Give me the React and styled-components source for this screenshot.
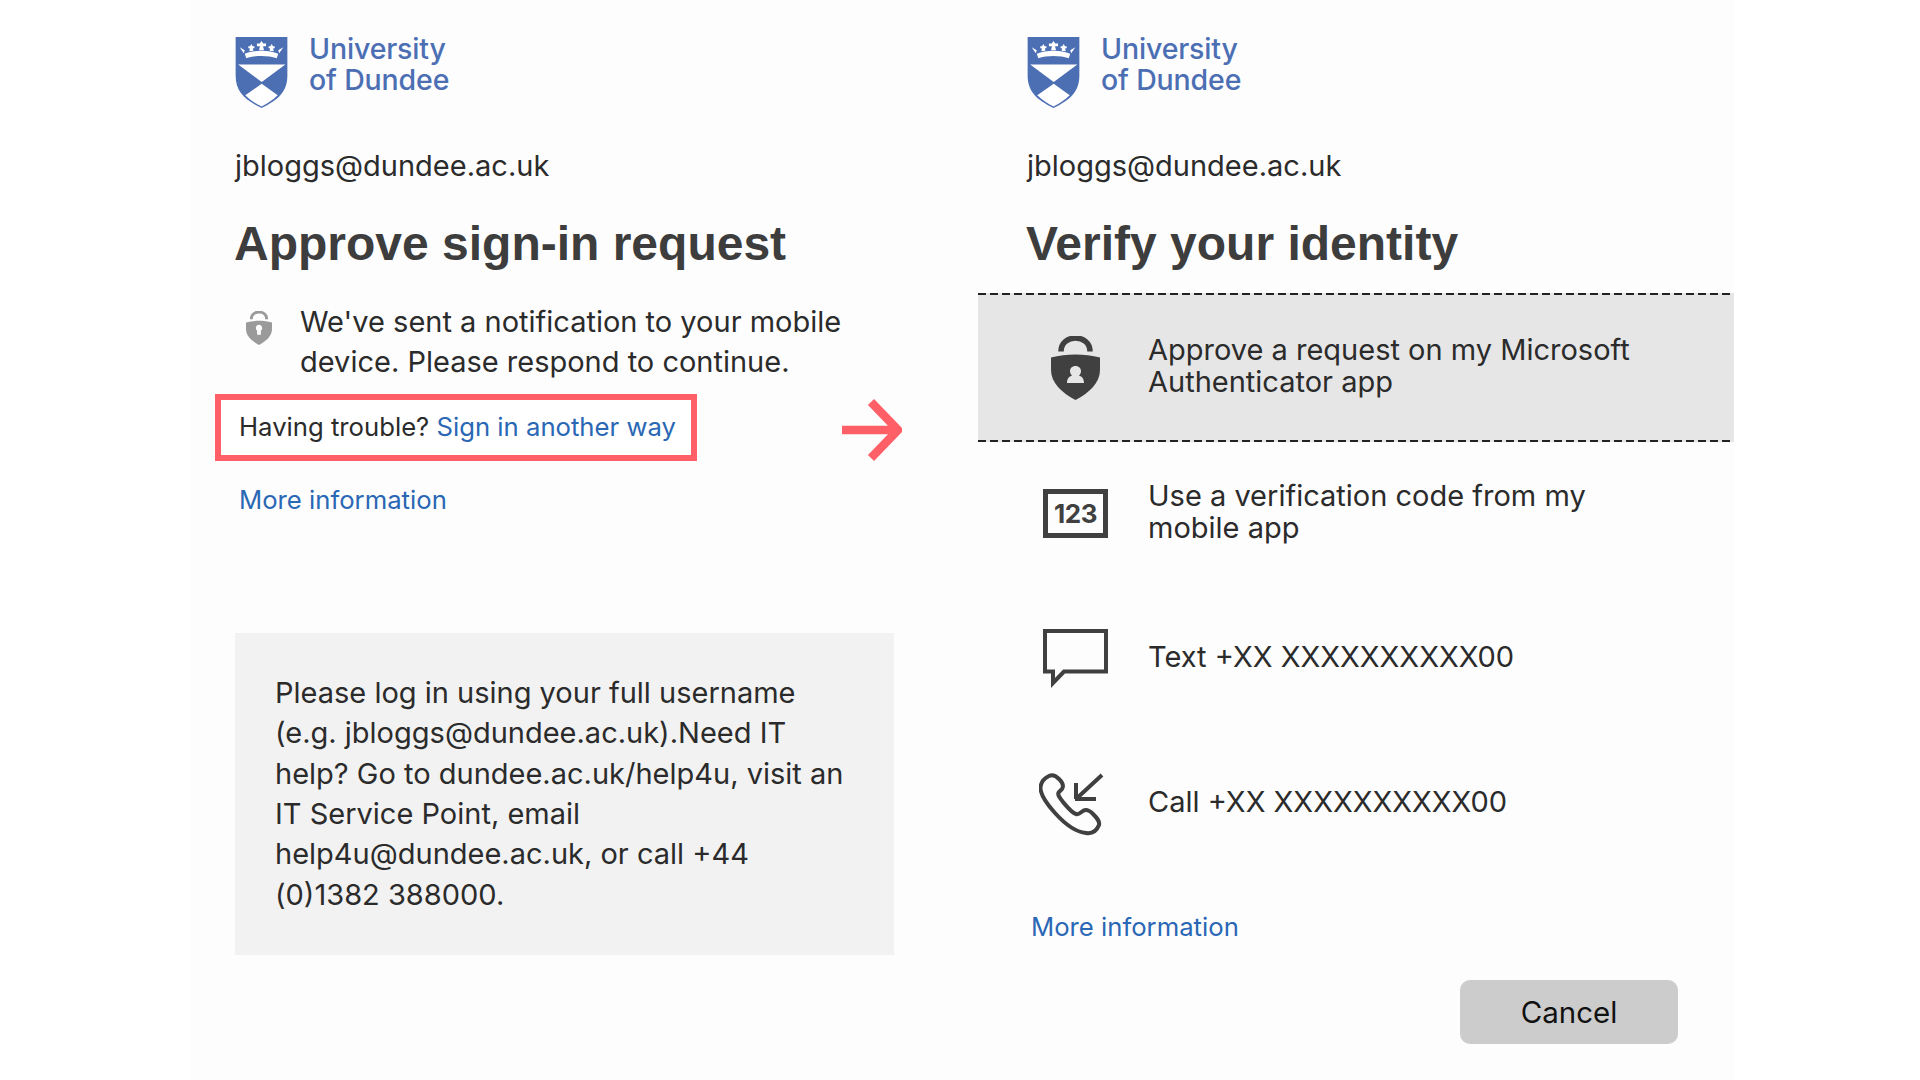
import styled, { createGlobalStyle } from "styled-components";

const GlobalStyle = createGlobalStyle`
  html, body {
    margin: 0;
    padding: 0;
    background: #ffffff;
  }
  * {
    box-sizing: border-box;
  }
`;

const Page = styled.div`
  width: 1920px;
  height: 1080px;
  overflow: hidden;
  display: flex;
  padding-left: 190px;
  font-family: Inter, "Liberation Sans", sans-serif;
  color: #2b2b2b;
`;

const Panel = styled.div`
  width: 788px;
  height: 1080px;
  padding-left: 45px;
  padding-top: 37px;
  background: #fdfdfd;
  flex: none;
`;

const RightPanel = styled.div`
  width: 756px;
  height: 1080px;
  padding-top: 37px;
  background: #fdfdfd;
  flex: none;
`;

const Brand = styled.div`
  display: flex;
  align-items: flex-start;
  gap: 21px;
  height: 71px;
`;

const BrandName = styled.div`
  margin-top: -4px;
  font-size: 28.5px;
  line-height: 31px;
  font-weight: 500;
  color: #4c6fb4;
  letter-spacing: -0.15px;
`;

const Email = styled.div`
  margin-top: 40px;
  font-size: 29px;
  line-height: 36px;
`;

const Heading = styled.h1`
  margin: 30px 0 0 -1px;
  font-family: "Liberation Sans", Arial, sans-serif;
  font-size: 48px;
  line-height: 60px;
  font-weight: 700;
  color: #3d3d3d;
`;

const Notice = styled.div`
  display: flex;
  margin-top: 28px;
  width: 659px;
`;

const NoticeIcon = styled.div`
  width: 65px;
  padding: 9px 0 0 11px;
  flex: none;
`;

const NoticeText = styled.p`
  margin: 0;
  font-size: 29px;
  line-height: 40.4px;
`;

const TroubleRow = styled.div`
  display: flex;
  align-items: center;
  margin: 11px 0 0 -20px;
`;

const TroubleBox = styled.div`
  width: 482px;
  height: 67px;
  border: 6px solid #ff6068;
  padding: 0 0 2px 18px;
  display: flex;
  align-items: center;
  background: #ffffff;
  font-size: 25.7px;
  white-space: pre;
`;

const Link = styled.a`
  color: #2a67b5;
  font-size: 25.7px;
`;

const ArrowWrap = styled.div`
  margin: 5px 0 0 145px;
  display: flex;
`;

const MoreInfo = styled.div`
  margin: ${(p) => p.$margin};
  line-height: 32px;
`;

const HelpBox = styled.div`
  width: 659px;
  height: 322px;
  margin-top: 114px;
  padding: 40px 44px 0 40px;
  background: #f2f2f2;
  font-size: 29px;
  line-height: 40.4px;
`;

const RightHead = styled.div`
  padding-left: 49px;
`;

const Methods = styled.div`
  margin-top: 19px;
  display: flex;
  flex-direction: column;
`;

const Method = styled.div`
  height: 145px;
  padding: 0 0 2px 60px;
  display: flex;
  align-items: center;
  font-size: 29px;
  line-height: 32px;
  ${(p) =>
    p.$selected &&
    `
    height: 149px;
    padding-bottom: 0;
    background-color: #e6e6e6;
    background-image:
      repeating-linear-gradient(90deg, #222222 0 8px, transparent 8px 12px),
      repeating-linear-gradient(90deg, #222222 0 8px, transparent 8px 12px);
    background-size: 100% 2px;
    background-position: top, bottom;
    background-repeat: no-repeat;
  `}
`;

const MethodLabel = styled.span`
  margin-top: -3px;
`;

const MethodIcon = styled.div`
  width: 110px;
  flex: none;
  display: flex;
  padding-left: ${(p) => p.$inset}px;
`;

const CodeBox = styled.div`
  width: 65px;
  height: 49px;
  border: 5px solid #404040;
  display: flex;
  align-items: center;
  justify-content: center;
  font-size: 26px;
  font-weight: 700;
  letter-spacing: -0.5px;
  color: #404040;
`;

const Footer = styled.div`
  display: flex;
  justify-content: flex-end;
  padding-right: 56px;
  margin-top: 34px;
`;

const CancelButton = styled.button`
  width: 218px;
  height: 64px;
  border: 0;
  border-radius: 10px;
  background: #cccccc;
  font-family: inherit;
  font-size: 29.500px;
  color: #111111;
`;

function ShieldLogo() {
  return (
    <svg width="53" height="71" viewBox="0 0 51 70">
      <path d="M0 0H51V38C51 54 42 62 25.500 70C9 62 0 54 0 38Z" fill="#4c6fb4" />
      <path d="M2.500 27H49L25.700 44.300Z" fill="#fff" />
      <path d="M25.700 46L41.500 57.500C37 62 31 66 25.500 68.500C20 66 14 62 9.500 57.500Z" fill="#fff" />
      <path d="M9 16.500C18 12.500 33 12.500 42 16.500L40.500 21C32 18 19 18 10.500 21Z" fill="#fff" />
      <path d="M25.500 4L27.200 6.500H30V9H27L28 13H23L24 9H21V6.500H23.800Z" fill="#fff" />
      <path d="M15.500 7L16.800 9H18.500V11H17L17.500 13.500L13.500 14L14 11H12.500V9H14.200Z" fill="#fff" />
      <path d="M35.500 7L36.800 9H38.500V11H37L37.500 14L33.500 13.500L34 11H32.500V9H34.200Z" fill="#fff" />
      <path d="M4 10L9 13L8 16Z" fill="#fff" />
      <path d="M47 10L42 13L43 16Z" fill="#fff" />
    </svg>
  );
}

function AuthLock({ size, color, person }) {
  return (
    <svg width={size} height={(size * 64) / 49} viewBox="0 0 49 64">
      <path d="M10 15.500C10 -2.500 39 -2.500 39 15.500" fill="none" stroke={color} strokeWidth="5.500" />
      <path
        d="M0 21.500C8 19.500 16 18.500 24.500 18.500C33 18.500 41 19.500 49 21.500V34C49 47 38 57 24.500 64C11 57 0 47 0 34Z"
        fill={color}
      />
      {person ? (
        <path
          d="M24.500 30C28 30 30 32.500 30 35C30 37 29 38.500 28 39.500C30 40.500 33 41.500 33 47H16C16 41.500 19 40.500 21 39.500C20 38.500 19 37 19 35C19 32.500 21 30 24.500 30Z"
          fill="#e6e6e6"
        />
      ) : (
        <path
          d="M24.500 26C28 26 30.500 29 30.500 32C30.500 34 29.500 36 28 37V45H21V37C19.500 36 18.500 34 18.500 32C18.500 29 21 26 24.500 26Z"
          fill="#fdfdfd"
        />
      )}
    </svg>
  );
}

function ArrowMark() {
  return (
    <svg width="60" height="62" viewBox="0 0 60 62">
      <path
        d="M0 31H55M29 3L56 31L29 59"
        fill="none"
        stroke="#ff6068"
        strokeWidth="8.500"
      />
    </svg>
  );
}

function ChatIcon() {
  return (
    <svg width="65" height="59" viewBox="0 0 65 59">
      <path
        d="M2 2H63V42.500H21L10 54V42.500H2Z"
        fill="none"
        stroke="#404040"
        strokeWidth="4"
      />
    </svg>
  );
}

function PhoneIcon() {
  return (
    <svg width="65" height="64" viewBox="0 0 65 64">
      <path
        d="M10 4C14 2 17 4 20 7C24 11 25 14 23 17L20 20C18 22 20 25 24 30C29 36 33 41 37 42C40 43 42 40 44 39C47 37 50 38 54 42C58 46 61 49 60 53C58 58 54 62 47 61C36 60 25 51 16 41C7 31 1 22 1.500 15C2 10 6 6 10 4Z"
        fill="none"
        stroke="#404040"
        strokeWidth="4"
        strokeLinejoin="round"
      />
      <path d="M37 25V9M36 25H57M37 25L63 1" fill="none" stroke="#404040" strokeWidth="4" transform="translate(0 2)" />
    </svg>
  );
}

function Logo() {
  return (
    <Brand>
      <ShieldLogo />
      <BrandName>
        University
        <br />
        of Dundee
      </BrandName>
    </Brand>
  );
}

export default function App() {
  return (
    <Page>
      <GlobalStyle />
      <Panel>
        <Logo />
        <Email>jbloggs@dundee.ac.uk</Email>
        <Heading>Approve sign-in request</Heading>
        <Notice>
          <NoticeIcon>
            <AuthLock size={26} color="#9a9a9a" />
          </NoticeIcon>
          <NoticeText>
            We've sent a notification to your mobile device. Please respond to
            continue.
          </NoticeText>
        </Notice>
        <TroubleRow>
          <TroubleBox>
            Having trouble? <Link>Sign in another way</Link>
          </TroubleBox>
          <ArrowWrap>
            <ArrowMark />
          </ArrowWrap>
        </TroubleRow>
        <MoreInfo $margin="23px 0 0 4px">
          <Link>More information</Link>
        </MoreInfo>
        <HelpBox>
          Please log in using your full username (e.g. jbloggs@dundee.ac.uk).Need
          IT help? Go to dundee.ac.uk/help4u, visit an IT Service Point, email
          help4u@dundee.ac.uk, or call +44 (0)1382 388000.
        </HelpBox>
      </Panel>
      <RightPanel>
        <RightHead>
          <Logo />
          <Email>jbloggs@dundee.ac.uk</Email>
          <Heading>Verify your identity</Heading>
        </RightHead>
        <Methods>
          <Method $selected>
            <MethodIcon $inset={13}>
              <AuthLock size={49} color="#404040" person />
            </MethodIcon>
            <MethodLabel>
              Approve a request on my Microsoft
              <br />
              Authenticator app
            </MethodLabel>
          </Method>
          <Method>
            <MethodIcon $inset={5}>
              <CodeBox>123</CodeBox>
            </MethodIcon>
            <MethodLabel>
              Use a verification code from my
              <br />
              mobile app
            </MethodLabel>
          </Method>
          <Method>
            <MethodIcon $inset={5}>
              <ChatIcon />
            </MethodIcon>
            <MethodLabel>Text +XX XXXXXXXXXX00</MethodLabel>
          </Method>
          <Method>
            <MethodIcon $inset={1}>
              <PhoneIcon />
            </MethodIcon>
            <MethodLabel>Call +XX XXXXXXXXXX00</MethodLabel>
          </Method>
        </Methods>
        <MoreInfo $margin="34px 0 0 53px">
          <Link>More information</Link>
        </MoreInfo>
        <Footer>
          <CancelButton>Cancel</CancelButton>
        </Footer>
      </RightPanel>
    </Page>
  );
}
